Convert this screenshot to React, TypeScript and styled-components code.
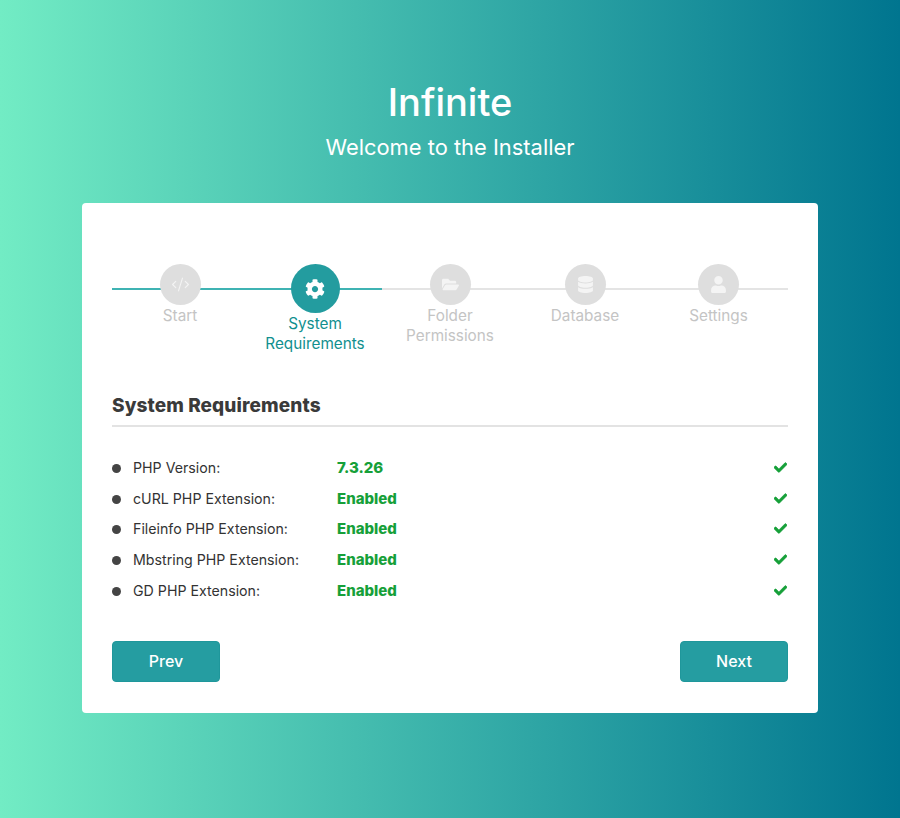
import React from "react";
import styled, { createGlobalStyle } from "styled-components";
import { FaCheck, FaCog, FaFolderOpen, FaDatabase, FaUser } from "react-icons/fa";
import { CodeXml } from "lucide-react";

const Global = createGlobalStyle`
  html, body { margin: 0; padding: 0; }
  body { font-family: Inter, "Noto Sans", sans-serif; }
`;

const Page = styled.div`
  width: 900px;
  height: 818px;
  box-sizing: border-box;
  padding-top: 78px;
  background: linear-gradient(90deg, #72ecc4 0%, #00758f 100%);
  overflow: hidden;
`;

const Header = styled.header`
  text-align: center;
  color: #fff;
  height: 125px;
`;

const Title = styled.h1`
  margin: 0;
  font-size: 38px;
  line-height: 48px;
  font-weight: 500;
`;

const Subtitle = styled.p`
  margin: 0;
  padding-top: 3px;
  font-size: 21.9px;
  line-height: 36px;
  font-weight: 400;
`;

const Card = styled.main`
  width: 736px;
  height: 510px;
  margin: 0 auto;
  box-sizing: border-box;
  padding: 61px 30px 30px 30px;
  background: #fff;
  border-radius: 4px;
`;

const Stepper = styled.ol`
  position: relative;
  display: grid;
  grid-template-columns: repeat(4, 135px) 136px;
  width: 676px;
  height: 128px;
  margin: 0;
  padding: 0;
  list-style: none;
`;

const Track = styled.div<{ $active?: boolean }>`
  position: absolute;
  top: 24px;
  left: 0;
  width: ${(p) => (p.$active ? "270px" : "676px")};
  height: 2px;
  background: ${(p) => (p.$active ? "#3fb3b3" : "#e4e4e4")};
`;

const Step = styled.li<{ $last?: boolean }>`
  position: relative;
  display: flex;
  flex-direction: column;
  align-items: center;
  padding-left: ${(p) => (p.$last ? "0" : "1px")};
  padding-right: ${(p) => (p.$last ? "3px" : "0")};
  text-align: center;
`;

const Bubble = styled.span<{ $active?: boolean }>`
  display: flex;
  align-items: center;
  justify-content: center;
  width: ${(p) => (p.$active ? "49px" : "41px")};
  height: ${(p) => (p.$active ? "49px" : "41px")};
  border-radius: 50%;
  background: ${(p) => (p.$active ? "#239c9f" : "#dedede")};
  color: ${(p) => (p.$active ? "#fff" : "#f4f4f4")};
  font-size: ${(p) => (p.$active ? "20px" : "17px")};
`;

const StepLabel = styled.span<{ $active?: boolean; $narrow?: boolean }>`
  display: block;
  max-width: ${(p) => (p.$narrow ? "110px" : "none")};
  padding-top: 1px;
  font-size: 15.3px;
  line-height: 20px;
  color: ${(p) => (p.$active ? "#11908f" : "#c4c4c4")};
`;

const SectionTitle = styled.h2`
  margin: 0;
  padding: 1px 0 6px;
  border-bottom: 2px solid #e3e3e3;
  font-size: 19px;
  line-height: 26px;
  font-weight: 800;
  letter-spacing: 0.1px;
  color: #3a3a3a;
`;

const List = styled.ul`
  margin: 25px 0 0;
  padding: 0;
  list-style: none;
`;

const Row = styled.li`
  display: flex;
  align-items: center;
  height: 30.75px;
  font-size: 14.2px;
  color: #333;
`;

const Bullet = styled.span`
  flex: none;
  width: 9px;
  height: 9px;
  margin: 2px 12px 0 0;
  border-radius: 50%;
  background: #444;
`;

const Name = styled.span`
  flex: none;
  width: 204px;
`;

const Value = styled.strong`
  flex: 1;
  font-size: 15px;
  font-weight: 800;
  color: #16a039;
`;

const Check = styled(FaCheck)`
  color: #16a039;
  font-size: 13px;
  margin-right: 1px;
  stroke: #16a039;
  stroke-width: 25px;
`;

const Actions = styled.div`
  display: flex;
  justify-content: space-between;
  margin-top: 35px;
`;

const Button = styled.button`
  width: 108px;
  height: 41px;
  padding: 0;
  box-sizing: border-box;
  border: 1px solid #1f979b;
  border-radius: 4px;
  background: #259da1;
  color: #fff;
  font-family: inherit;
  font-size: 16px;
  font-weight: 500;
`;

const steps = [
  { label: "Start", icon: <CodeXml size={19} strokeWidth={1.4} /> },
  { label: "System Requirements", icon: <FaCog />, active: true, narrow: true },
  { label: "Folder Permissions", icon: <FaFolderOpen />, narrow: true },
  { label: "Database", icon: <FaDatabase /> },
  { label: "Settings", icon: <FaUser />, last: true },
];

const rows = [
  ["PHP Version:", "7.3.26"],
  ["cURL PHP Extension:", "Enabled"],
  ["Fileinfo PHP Extension:", "Enabled"],
  ["Mbstring PHP Extension:", "Enabled"],
  ["GD PHP Extension:", "Enabled"],
];

export default function App() {
  return (
    <Page>
      <Global />
      <Header>
        <Title>Infinite</Title>
        <Subtitle>Welcome to the Installer</Subtitle>
      </Header>
      <Card>
        <Stepper>
          <Track />
          <Track $active />
          {steps.map((s) => (
            <Step key={s.label} $last={s.last}>
              <Bubble $active={s.active}>{s.icon}</Bubble>
              <StepLabel $active={s.active} $narrow={s.narrow}>{s.label}</StepLabel>
            </Step>
          ))}
        </Stepper>
        <SectionTitle>System Requirements</SectionTitle>
        <List>
          {rows.map(([name, value]) => (
            <Row key={name}>
              <Bullet />
              <Name>{name}</Name>
              <Value>{value}</Value>
              <Check />
            </Row>
          ))}
        </List>
        <Actions>
          <Button>Prev</Button>
          <Button>Next</Button>
        </Actions>
      </Card>
    </Page>
  );
}
